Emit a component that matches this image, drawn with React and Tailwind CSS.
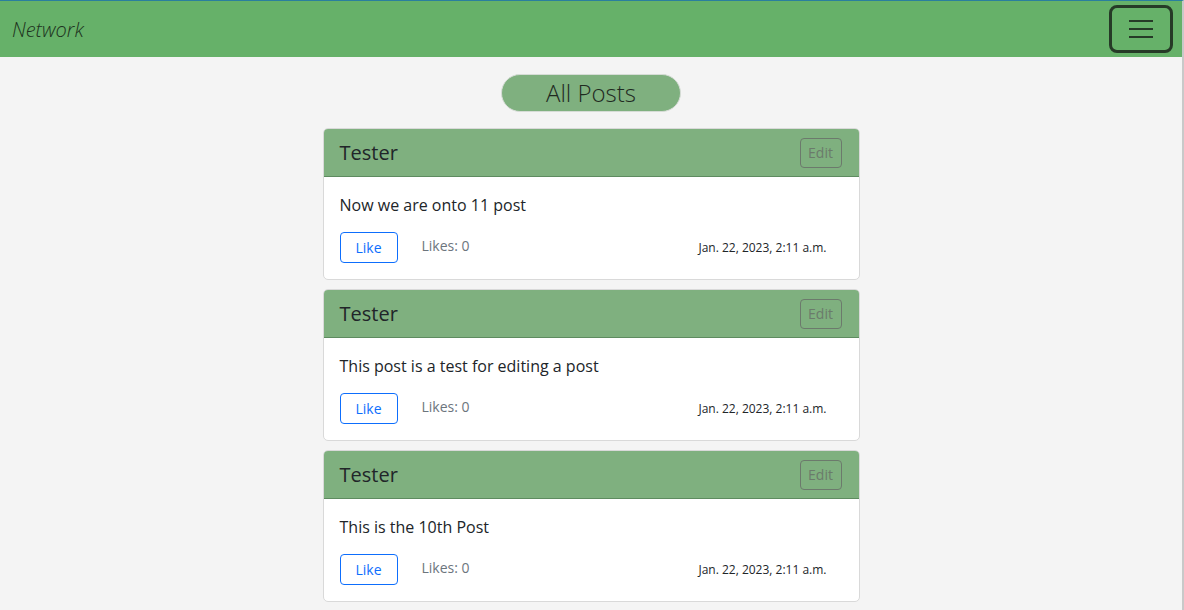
import React from "react";

const posts = [
  { id: 11, author: "Tester", body: "Now we are onto 11 post", likes: 0, date: "Jan. 22, 2023, 2:11 a.m." },
  { id: 10, author: "Tester", body: "This post is a test for editing a post", likes: 0, date: "Jan. 22, 2023, 2:11 a.m." },
  { id: 9, author: "Tester", body: "This is the 10th Post", likes: 0, date: "Jan. 22, 2023, 2:11 a.m." },
];

function PostCard({ post }) {
  return (
    <div className="w-[537px] bg-white border border-[#d9d9d9] rounded-[5px] overflow-hidden">
      <div className="h-[48px] bg-[#7fb07f] border-b border-[#5e8b60] flex items-center justify-between pl-[16px] pr-[17px]">
        <span className="text-[20px] text-[#212529]">{post.author}</span>
        <button className="w-[42px] h-[30px] border border-[#6c7a6c] rounded-[4px] text-[14px] text-[#6b7b6b]">
          Edit
        </button>
      </div>
      <div className="px-[16px] pt-[16px] pb-[16px]">
        <p className="text-[16px] text-[#212529] leading-[24px]">{post.body}</p>
        <div className="flex items-start mt-[15px]">
          <button className="w-[58px] h-[31px] border border-[#0d6efd] rounded-[4px] text-[14px] text-[#0d6efd]">
            Like
          </button>
          <span className="ml-[24px] mt-[3px] text-[14px] text-[#6c757d]">Likes: {post.likes}</span>
          <span className="ml-auto mr-[16px] mt-[7px] text-[12px] text-[#212529]">{post.date}</span>
        </div>
      </div>
    </div>
  );
}

export default function App() {
  return (
    <div
      className="w-[1184px] h-[610px] overflow-hidden bg-[#f4f4f4] border-t border-[#2a7f9e] border-r-2 border-r-[#c9c9c9]"
      style={{ fontFamily: '"Open Sans", "Noto Sans", sans-serif' }}
    >
      <nav className="h-[56px] bg-[#66b169] flex items-center justify-between pl-[12px] pr-[9px]">
        <span className="mt-[2px] text-[20px] italic font-light text-[#1e3320]">Network</span>
        <button className="w-[64px] h-[48px] border-[3px] border-[#263a27] rounded-[8px] flex flex-col items-center justify-center gap-[6px]">
          <span className="block w-[24px] h-[2px] bg-[#263a27]" />
          <span className="block w-[24px] h-[2px] bg-[#263a27]" />
          <span className="block w-[24px] h-[2px] bg-[#263a27]" />
        </button>
      </nav>
      <div className="flex flex-col items-center pt-[17px]">
        <div className="w-[180px] h-[38px] rounded-full bg-[#7fb07f] border border-[#d6dcd6] flex items-center justify-center text-[24px] font-light text-[#1f2a1f]">
          All Posts
        </div>
        <div className="mt-[16px] flex flex-col gap-[9px]">
          {posts.map((p) => (
            <PostCard key={p.id} post={p} />
          ))}
        </div>
      </div>
    </div>
  );
}
